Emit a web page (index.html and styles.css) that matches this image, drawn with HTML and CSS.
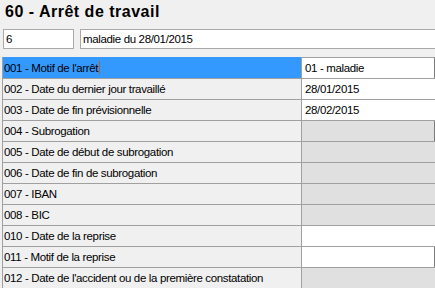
FILE: index.html
```html
<!DOCTYPE html>
<html lang="fr">
<head>
<meta charset="utf-8">
<title>60 - Arrêt de travail</title>
<link rel="stylesheet" href="styles.css">
</head>
<body>
<div class="title">60 - Arrêt de travail</div>
<div class="fields">
  <div class="box box-code">6</div>
  <div class="box box-label">maladie du 28/01/2015</div>
</div>
<div class="grid">
  <div class="row row-first selected">
    <div class="label">001 - Motif de l'arrêt<span class="caret"></span></div>
    <div class="value edit framed">01 - maladie</div>
  </div>
  <div class="row">
    <div class="label">002 - Date du dernier jour travaillé</div>
    <div class="value edit">28/01/2015</div>
  </div>
  <div class="row">
    <div class="label">003 - Date de fin prévisionnelle</div>
    <div class="value edit">28/02/2015</div>
  </div>
  <div class="row">
    <div class="label">004 - Subrogation</div>
    <div class="value framed"></div>
  </div>
  <div class="row">
    <div class="label">005 - Date de début de subrogation</div>
    <div class="value"></div>
  </div>
  <div class="row">
    <div class="label">006 - Date de fin de subrogation</div>
    <div class="value"></div>
  </div>
  <div class="row">
    <div class="label">007 - IBAN</div>
    <div class="value"></div>
  </div>
  <div class="row">
    <div class="label">008 - BIC</div>
    <div class="value"></div>
  </div>
  <div class="row">
    <div class="label">010 - Date de la reprise</div>
    <div class="value edit"></div>
  </div>
  <div class="row">
    <div class="label">011 - Motif de la reprise</div>
    <div class="value edit framed"></div>
  </div>
  <div class="row">
    <div class="label">012 - Date de l'accident ou de la première constatation</div>
    <div class="value"></div>
  </div>
</div>
</body>
</html>
```

FILE: styles.css
```css
html, body {
  margin: 0;
  padding: 0;
  background: #f0f0f0;
  overflow: hidden;
}
body {
  width: 435px;
  height: 288px;
  font-family: "Liberation Sans", Arial, sans-serif;
  font-size: 11.5px;
  letter-spacing: -0.35px;
  color: #000;
}
.title {
  height: 29px;
  box-sizing: border-box;
  padding: 4px 0 0 5px;
  font-size: 16px;
  line-height: 16px;
  font-weight: bold;
  letter-spacing: 0.5px;
  color: #000;
}
.fields {
  display: flex;
  gap: 6px;
  height: 20px;
  margin-left: 3px;
  margin-right: -6px;
}
.box {
  box-sizing: border-box;
  height: 20px;
  border: 1px solid #a9a9a9;
  background: #fff;
  line-height: 18px;
  padding-left: 2px;
}
.box-code {
  width: 71px;
}
.box-label {
  flex: 1;
}
.grid {
  margin-top: 8px;
  margin-left: 2px;
  border-left: 1px solid #a0a0a0;
  display: flex;
  flex-direction: column;
}
.row {
  display: flex;
  height: 21px;
  box-sizing: border-box;
  border-bottom: 1px solid #a0a0a0;
}
.row-first {
  height: 22px;
}
.label {
  width: 299px;
  flex: none;
  padding-left: 1px;
  box-sizing: border-box;
  background: #f0f0f0;
  border-right: 1px solid #a0a0a8;
  white-space: nowrap;
  display: flex;
  align-items: center;
}
.selected .label {
  background: #3399ff;
}
.caret {
  display: inline-block;
  width: 1px;
  height: 13px;
  margin-left: 1px;
  background: #b5651d;
}
.value {
  flex: 1;
  background: #e0e0e0;
  padding-left: 3px;
  display: flex;
  align-items: center;
  white-space: nowrap;
}
.value.edit {
  background: #fff;
}
.value.framed {
  border-right: 1px solid #7a7a7a;
}
.row-first .value {
  border-top: 1px solid #a0a0a0;
}
```
